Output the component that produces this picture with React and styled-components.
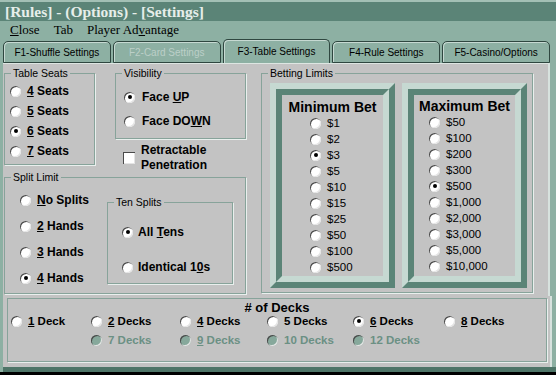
import styled, { createGlobalStyle } from "styled-components";

const TEAL = "#8db0a3";
const DARK_TEAL = "#5b8477";
const LIGHT = "#c6d9d2";
const GRAY = "#c3c3c3";
const LINE = "#87a39a";

const GlobalStyle = createGlobalStyle`
  html, body {
    margin: 0;
    padding: 0;
    background: #000;
  }
  body {
    font-family: "Liberation Sans", Arial, sans-serif;
  }
`;

const Window = styled.div`
  width: 556px;
  height: 375px;
  display: flex;
  flex-direction: column;
  background: ${TEAL};
  overflow: hidden;
`;

const TitleBar = styled.div`
  height: 21px;
  box-sizing: border-box;
  border-top: 2px solid #a3c0b5;
  background: ${DARK_TEAL};
  color: #e6eeea;
  font: bold 15.5px/19px "Liberation Serif", "Times New Roman", serif;
  padding-left: 5px;
  white-space: nowrap;
`;

const MenuBar = styled.div`
  height: 17px;
  display: flex;
  gap: 14px;
  padding-left: 10px;
  font: 13px/17px "Liberation Serif", "Times New Roman", serif;
  color: #000;
`;

const TabRow = styled.div`
  height: 25px;
  display: flex;
  align-items: flex-end;
  gap: 2px;
  padding: 0 6px 0 3px;
`;

const Tab = styled.div`
  flex: 1;
  height: ${(p) => (p.$active ? 24 : 22)}px;
  box-sizing: border-box;
  border: 1px solid #2f4740;
  border-bottom: ${(p) => (p.$active ? "none" : "1px solid #2f4740")};
  border-radius: 5px 5px 0 0;
  background: ${TEAL};
  box-shadow: inset 1px 1px 0 ${LIGHT};
  display: flex;
  align-items: center;
  justify-content: center;
  font-size: 10px;
  color: ${(p) => (p.$disabled ? "#bccfc8" : "#000")};
  white-space: nowrap;
`;

const Panel = styled.div`
  height: 233px;
  box-sizing: border-box;
  margin: 0 6px 0 3px;
  background: ${GRAY};
  border-top: 1px solid #dde6e2;
  border-right: 2px solid #d7e2de;
  padding: 3px 0 0 1px;
  display: flex;
`;

const LeftCol = styled.div`
  width: 242px;
  display: flex;
  flex-direction: column;
`;

const TopRow = styled.div`
  height: 104px;
  display: flex;
  align-items: flex-start;
  gap: 20px;
`;

const SideCol = styled.div`
  width: 131px;
  display: flex;
  flex-direction: column;
`;

const Group = styled.fieldset`
  margin: 0;
  padding: 0;
  min-width: 0;
  box-sizing: border-box;
  width: ${(p) => p.$w}px;
  height: ${(p) => p.$h}px;
  border: 1px solid ${LINE};
  box-shadow: 1px 1px 0 #e9efed;
  margin-left: ${(p) => p.$ml || 0}px;
  margin-top: ${(p) => p.$mt || 0}px;
  flex: none;
`;

const Legend = styled.legend`
  font-size: 10.5px;
  line-height: 12px;
  padding: 0 2px;
  margin-left: 6px;
  color: #000;
`;

const OptionList = styled.div`
  display: flex;
  flex-direction: column;
  gap: ${(p) => p.$gap || 0}px;
  padding: ${(p) => p.$pt || 0}px 0 0 ${(p) => p.$pl || 0}px;
  width: ${(p) => (p.$w ? `${p.$w}px` : "auto")};
  flex: none;
`;

const Option = styled.div`
  height: ${(p) => p.$h}px;
  display: flex;
  align-items: center;
  gap: ${(p) => p.$gap || 6}px;
  font-size: 12px;
  font-weight: bold;
  color: ${(p) => (p.$disabled ? "#6b9084" : "#000")};
  white-space: nowrap;
`;

const RadioDot = styled.span`
  width: 11px;
  height: 11px;
  flex: none;
  border-radius: 50%;
  background: ${(p) => (p.$disabled ? "#86a89b" : "#fff")};
  box-shadow: inset 1px 1px 0 #4a4a4a, inset -1px -1px 0 #e4e4e4;
  display: flex;
  align-items: center;
  justify-content: center;

  &::after {
    content: "";
    display: ${(p) => (p.$checked ? "block" : "none")};
    width: 4px;
    height: 4px;
    border-radius: 50%;
    background: #000;
  }
`;

const U = styled.span`
  text-decoration: underline;
`;

const CheckRow = styled.div`
  display: flex;
  align-items: center;
  gap: 6px;
  margin: 4px 0 0 8px;
  font-size: 12px;
  font-weight: bold;
  line-height: 15px;
`;

const CheckBox = styled.span`
  width: 12px;
  height: 12px;
  flex: none;
  background: #fff;
  box-shadow: inset 1px 1px 0 #4a4a4a, inset -1px -1px 0 #e4e4e4;
`;

const SplitBody = styled.div`
  display: flex;
  padding-left: 15px;
`;

const BetRow = styled.div`
  display: flex;
  gap: 7px;
  padding: 4px 0 0 8px;
`;

const BetFrame = styled.div`
  width: 125px;
  height: 205px;
  box-sizing: border-box;
  border: 6px solid;
  border-color: ${LIGHT} ${DARK_TEAL} ${DARK_TEAL} ${LIGHT};
`;

const BetInner = styled.div`
  height: 100%;
  box-sizing: border-box;
  border: 6px solid;
  border-color: ${DARK_TEAL} ${LIGHT} ${LIGHT} ${DARK_TEAL};
  background: ${GRAY};
  padding-top: ${(p) => p.$pt}px;
  display: flex;
  flex-direction: column;
`;

const BetTitle = styled.div`
  text-align: center;
  font-size: 14px;
  font-weight: bold;
  line-height: 16px;
  white-space: nowrap;
`;

const BetOption = styled.div`
  height: 16px;
  display: flex;
  align-items: center;
  gap: 6px;
  font-size: 11.5px;
  padding-left: ${(p) => p.$indent}px;
`;

const DecksPanel = styled.div`
  height: 71px;
  box-sizing: border-box;
  margin: 0 4px 0 3px;
  background: ${GRAY};
  border-right: 2px solid #d7e2de;
  padding: 2px 0 0 4px;
`;

const DecksBox = styled.div`
  width: 540px;
  height: 64px;
  box-sizing: border-box;
  border: 1px solid ${LINE};
  box-shadow: 1px 1px 0 #e9efed;
  display: flex;
  flex-direction: column;
`;

const DecksTitle = styled.div`
  text-align: center;
  font-size: 13px;
  font-weight: bold;
  line-height: 13px;
  padding-top: 2px;
`;

const DecksGrid = styled.div`
  display: grid;
  grid-template-columns: 80px 89px 87px 86px 91px 1fr;
  grid-auto-rows: 14px;
  row-gap: 5px;
  padding-left: 3px;
`;

const DeckCell = styled.div`
  grid-column: ${(p) => p.$col};
  grid-row: ${(p) => p.$row};
  display: flex;
  align-items: center;
  gap: 6px;
  font-size: 11.5px;
  font-weight: bold;
  color: ${(p) => (p.$disabled ? "#6b9084" : "#000")};
  white-space: nowrap;
`;

const BottomEdge = styled.div`
  height: 5px;
  margin-left: 3px;
  background: #4e7568;
`;

const BlackEdge = styled.div`
  height: 3px;
  background: #000;
`;

const seats = [
  { k: "4", checked: false },
  { k: "5", checked: false },
  { k: "6", checked: true },
  { k: "7", checked: false },
];

const splits = [
  { k: "N", rest: "o Splits", checked: false },
  { k: "2", rest: " Hands", checked: false },
  { k: "3", rest: " Hands", checked: false },
  { k: "4", rest: " Hands", checked: true },
];

const minBets = ["$1", "$2", "$3", "$5", "$10", "$15", "$25", "$50", "$100", "$500"];
const maxBets = ["$50", "$100", "$200", "$300", "$500", "$1,000", "$2,000", "$3,000", "$5,000", "$10,000"];

const decks = [
  { row: 1, col: 1, u: "1", rest: " Deck" },
  { row: 1, col: 2, u: "2", rest: " Decks" },
  { row: 1, col: 3, u: "4", rest: " Decks" },
  { row: 1, col: 4, u: null, rest: "5 Decks" },
  { row: 1, col: 5, u: "6", rest: " Decks", checked: true },
  { row: 1, col: 6, u: "8", rest: " Decks" },
  { row: 2, col: 2, u: null, rest: "7 Decks", disabled: true },
  { row: 2, col: 3, u: "9", rest: " Decks", disabled: true },
  { row: 2, col: 4, u: null, rest: "10 Decks", disabled: true },
  { row: 2, col: 5, u: null, rest: "12 Decks", disabled: true },
];

function BetColumn({ title, items, checked, indent, pt }) {
  return (
    <BetFrame>
      <BetInner $pt={pt}>
        <BetTitle>{title}</BetTitle>
        {items.map((v) => (
          <BetOption key={v} $indent={indent}>
            <RadioDot $checked={v === checked} />
            {v}
          </BetOption>
        ))}
      </BetInner>
    </BetFrame>
  );
}

export default function App() {
  return (
    <>
      <GlobalStyle />
      <Window>
        <TitleBar>[Rules] - (Options) - [Settings]</TitleBar>
        <MenuBar>
          <span>
            <U>C</U>lose
          </span>
          <span>Tab</span>
          <span>
            Player Ad<U>v</U>antage
          </span>
        </MenuBar>

        <TabRow>
          <Tab>F1-Shuffle Settings</Tab>
          <Tab $disabled>F2-Card Settings</Tab>
          <Tab $active>F3-Table Settings</Tab>
          <Tab>F4-Rule Settings</Tab>
          <Tab>F5-Casino/Options</Tab>
        </TabRow>

        <Panel>
          <LeftCol>
            <TopRow>
              <Group $w={91} $h={98}>
                <Legend>Table Seats</Legend>
                <OptionList $pt={2} $pl={5}>
                  {seats.map((s) => (
                    <Option key={s.k} $h={20}>
                      <RadioDot $checked={s.checked} />
                      <span>
                        <U>{s.k}</U> Seats
                      </span>
                    </Option>
                  ))}
                </OptionList>
              </Group>

              <SideCol>
                <Group $w={131} $h={72}>
                  <Legend>Visibility</Legend>
                  <OptionList $pt={6} $pl={8}>
                    <Option $h={24} $gap={7}>
                      <RadioDot $checked />
                      <span>
                        Face <U>U</U>P
                      </span>
                    </Option>
                    <Option $h={24} $gap={7}>
                      <RadioDot />
                      <span>
                        Face DO<U>W</U>N
                      </span>
                    </Option>
                  </OptionList>
                </Group>
                <CheckRow>
                  <CheckBox />
                  <span>
                    Retractable
                    <br />
                    Penetration
                  </span>
                </CheckRow>
              </SideCol>
            </TopRow>

            <Group $w={242} $h={123}>
              <Legend>Split Limit</Legend>
              <SplitBody>
                <OptionList $pt={4} $w={87}>
                  {splits.map((s) => (
                    <Option key={s.k} $h={26}>
                      <RadioDot $checked={s.checked} />
                      <span>
                        <U>{s.k}</U>
                        {s.rest}
                      </span>
                    </Option>
                  ))}
                </OptionList>
                <Group $w={126} $h={88} $mt={13}>
                  <Legend>Ten Splits</Legend>
                  <OptionList $pt={14} $pl={14} $gap={15}>
                    <Option $h={20} $gap={5}>
                      <RadioDot $checked />
                      <span>
                        All <U>T</U>ens
                      </span>
                    </Option>
                    <Option $h={20} $gap={5}>
                      <RadioDot />
                      <span>
                        Identical 1<U>0</U>s
                      </span>
                    </Option>
                  </OptionList>
                </Group>
              </SplitBody>
            </Group>
          </LeftCol>

          <Group $w={272} $h={226} $ml={15}>
            <Legend>Betting Limits</Legend>
            <BetRow>
              <BetColumn title="Minimum Bet" items={minBets} checked="$3" indent={28} pt={4} />
              <BetColumn title="Maximum Bet" items={maxBets} checked="$500" indent={15} pt={3} />
            </BetRow>
          </Group>
        </Panel>

        <DecksPanel>
          <DecksBox>
            <DecksTitle># of Decks</DecksTitle>
            <DecksGrid>
              {decks.map((d) => (
                <DeckCell key={d.rest + d.u} $row={d.row} $col={d.col} $disabled={d.disabled}>
                  <RadioDot $checked={d.checked} $disabled={d.disabled} />
                  <span>
                    {d.u && <U>{d.u}</U>}
                    {d.rest}
                  </span>
                </DeckCell>
              ))}
            </DecksGrid>
          </DecksBox>
        </DecksPanel>
        <BottomEdge />
        <BlackEdge />
      </Window>
    </>
  );
}
